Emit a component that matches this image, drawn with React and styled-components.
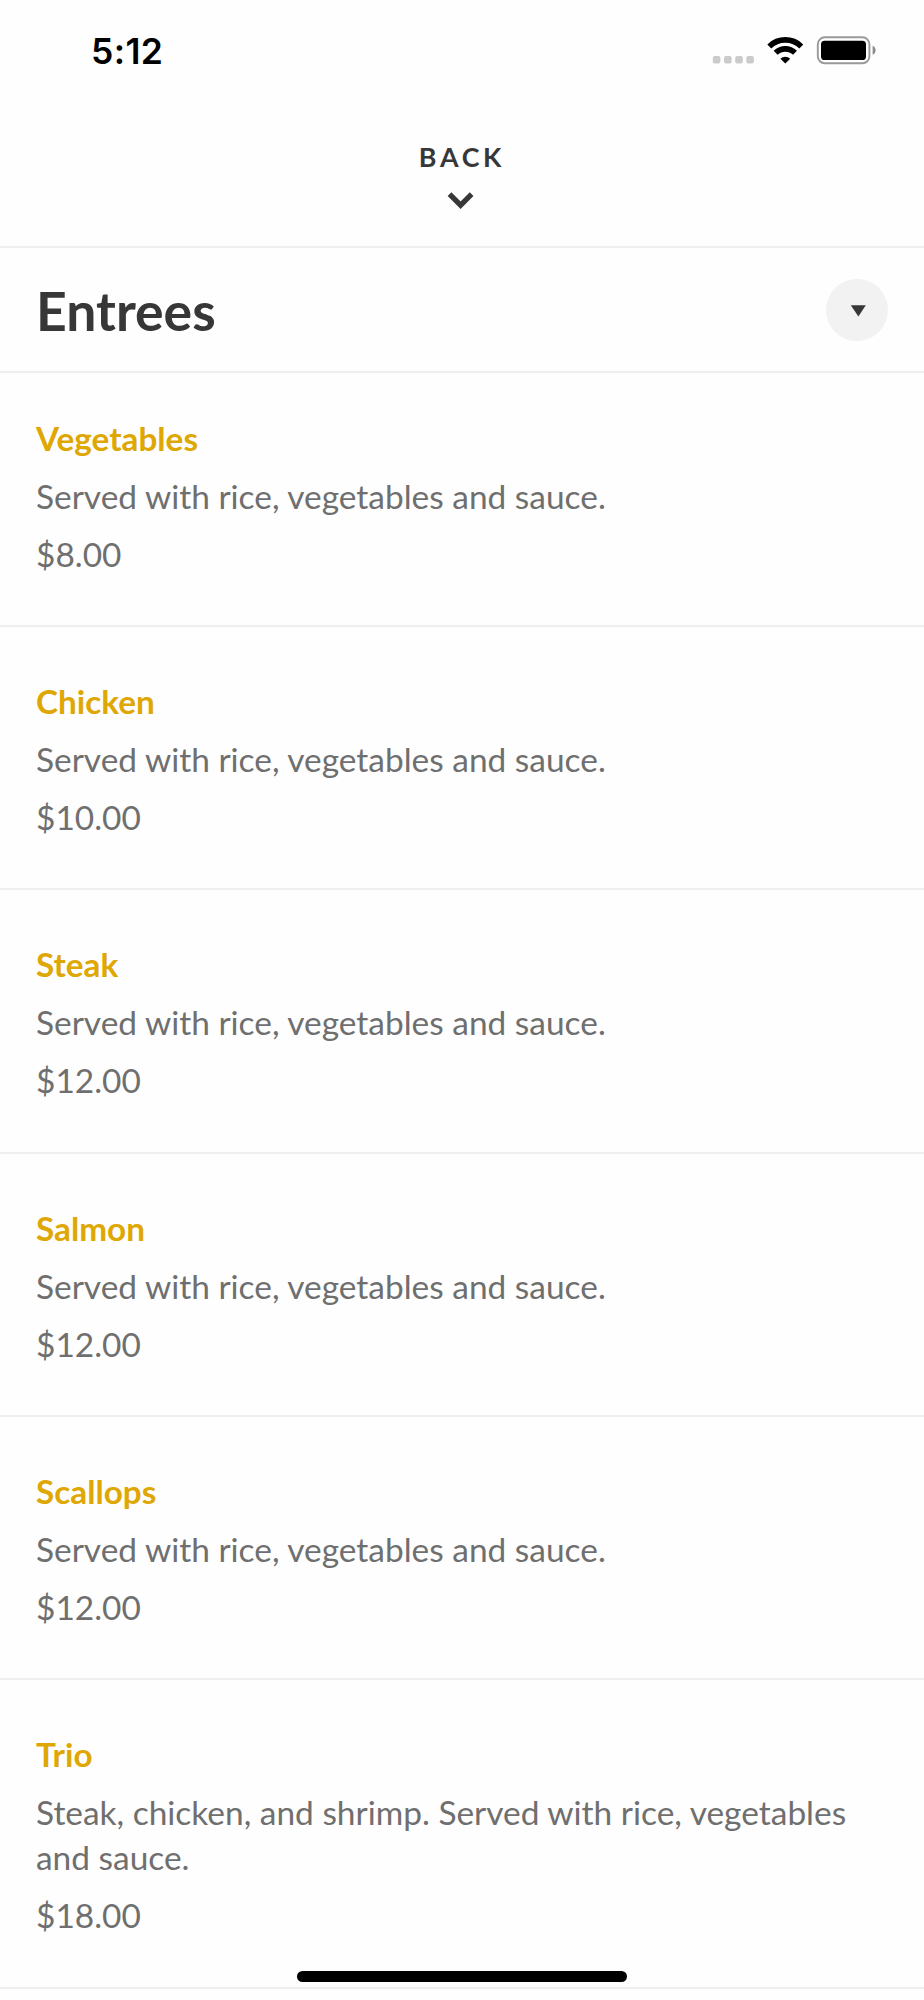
import React from 'react';
import styled, { createGlobalStyle } from 'styled-components';

const ink = '#373737';
const gold = '#dfa703';
const textGrey = '#6f6f6f';
const lineGrey = '#efefef';

const entrees = [
  { name: 'Vegetables', description: 'Served with rice, vegetables and sauce.', price: 8 },
  { name: 'Chicken', description: 'Served with rice, vegetables and sauce.', price: 10 },
  { name: 'Steak', description: 'Served with rice, vegetables and sauce.', price: 12 },
  { name: 'Salmon', description: 'Served with rice, vegetables and sauce.', price: 12 },
  { name: 'Scallops', description: 'Served with rice, vegetables and sauce.', price: 12 },
  {
    name: 'Trio',
    description: 'Steak, chicken, and shrimp. Served with rice, vegetables and sauce.',
    price: 18
  }
];

const formatPrice = price => `$${price.toFixed(2)}`;

const GlobalStyle = createGlobalStyle`
  * {
    box-sizing: border-box;
  }

  body {
    margin: 0;
    background: #fff;
    font-family: Lato, sans-serif;
  }
`;

const Screen = styled.div`
  position: relative;
  width: 924px;
  height: 2000px;
  overflow: hidden;
  background: #fefefe;
`;

const StatusBar = styled.div`
  display: flex;
  justify-content: space-between;
  height: 100px;
  padding: 30px 48px 0 91px;
`;

const Time = styled.div`
  font-family: Inter, sans-serif;
  font-size: 35.5px;
  font-weight: 600;
  line-height: 43px;
  letter-spacing: 0.4px;
  color: #000;
`;

const StatusIcons = styled.svg`
  display: block;
  width: 164px;
  height: 40px;
`;

const BackButton = styled.button`
  display: flex;
  flex-direction: column;
  align-items: center;
  width: 100%;
  height: 148px;
  padding: 41px 0 0;
  border: 0;
  border-bottom: 2px solid ${lineGrey};
  background: none;
  color: ${ink};
  font-family: inherit;
  font-size: 26.8px;
  font-weight: 700;
  line-height: 32px;
  letter-spacing: 3.7px;
`;

const Chevron = styled.svg`
  width: 28px;
  height: 20px;
  margin-top: 18px;
  margin-right: 3px;
`;

const SectionHeader = styled.div`
  display: flex;
  align-items: center;
  justify-content: space-between;
  height: 125px;
  padding: 0 36px;
  border-bottom: 2px solid ${lineGrey};
`;

const SectionTitle = styled.h1`
  margin: 1px 0 0;
  color: ${ink};
  font-size: 53.5px;
  font-weight: 700;
  line-height: 64px;
`;

const ToggleButton = styled.button`
  display: flex;
  align-items: center;
  justify-content: center;
  width: 62px;
  height: 62px;
  padding: 2px 0 0 1px;
  border: 0;
  border-radius: 50%;
  background: #f2f2f2;
`;

const MenuItem = styled.div`
  padding: ${({ $first }) => ($first ? '42.6px' : '51.93px')} 36px 48.4px;
  border-bottom: 2px solid ${lineGrey};
  color: ${textGrey};
  font-size: 33.45px;
  line-height: 45px;
`;

const ItemName = styled.div`
  color: ${gold};
  font-size: 33.3px;
  font-weight: 700;
`;

const ItemText = styled.div`
  margin-top: 13px;
`;

const HomeIndicator = styled.div`
  position: absolute;
  left: 297px;
  bottom: 18px;
  width: 330px;
  height: 11px;
  border-radius: 6px;
  background: #000;
`;

function PhoneStatus() {
  return (
    <StatusBar>
      <Time>5:12</Time>
      <StatusIcons viewBox="712 30 164 40">
        {/* no signal */}
        {[712.8, 724, 735.2, 746.3].map(x => (
          <rect key={x} x={x} y="56" width="7.6" height="7.4" rx="2" fill="#cbcbcb" />
        ))}
        <g fill="none" stroke="#000" strokeWidth="5.6">
          <path d="M769.3 46.4a23 23 0 0 1 32 0" />
          <path d="M775.6 52.8a14 14 0 0 1 19.4 0" />
        </g>
        <path d="M785.3 63.6l-4.9-4.9a7.2 7.2 0 0 1 9.8 0z" />
        <rect x="817.8" y="37.3" width="51.6" height="26" rx="7" fill="none" stroke="#999" strokeWidth="1.9" />
        <rect x="821" y="40.8" width="45" height="19.2" rx="3.6" />
        <path d="M872.6 45.8c4 1.6 4 7.4 0 9z" fill="#8c8c8c" />
      </StatusIcons>
    </StatusBar>
  );
}

function Entree({ item, first }) {
  return (
    <MenuItem $first={first}>
      <ItemName>{item.name}</ItemName>
      <ItemText>{item.description}</ItemText>
      <ItemText>{formatPrice(item.price)}</ItemText>
    </MenuItem>
  );
}

export default function App() {
  return (
    <Screen>
      <GlobalStyle />
      <PhoneStatus />
      <BackButton>
        BACK
        <Chevron viewBox="447 191 28 20">
          <path d="M449.5 194.1l11.1 11.1 11-11.1" fill="none" stroke={ink} strokeWidth="5.2" />
        </Chevron>
      </BackButton>
      <SectionHeader>
        <SectionTitle>Entrees</SectionTitle>
        <ToggleButton>
          <svg width="16" height="12" viewBox="0 0 16 12">
            <path d="M.8.3h15L8.4 11.6z" fill={ink} />
          </svg>
        </ToggleButton>
      </SectionHeader>
      {entrees.map((item, index) => (
        <Entree key={item.name} item={item} first={index === 0} />
      ))}
      <HomeIndicator />
    </Screen>
  );
}
